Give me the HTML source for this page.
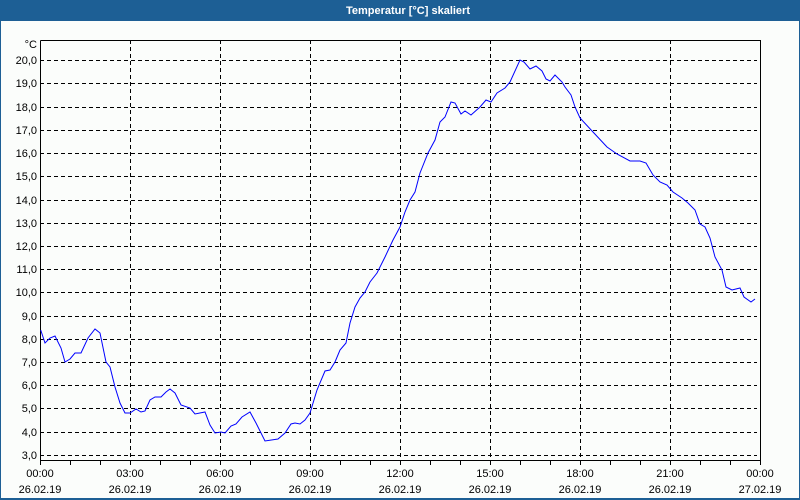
<!DOCTYPE html>
<html><head><meta charset="utf-8"><style>
body{margin:0;width:800px;height:500px;overflow:hidden;background:#fbfdfb;font-family:"Liberation Sans",sans-serif}
</style></head><body>
<svg width="800" height="500" xmlns="http://www.w3.org/2000/svg" style="display:block">
<rect x="0" y="0" width="800" height="500" fill="#fbfdfb"/>
<rect x="0" y="0" width="800" height="21" fill="#1d5f95"/>
<rect x="0" y="0" width="1" height="500" fill="#1d5f95"/>
<rect x="799" y="0" width="1" height="500" fill="#1d5f95"/>
<rect x="0" y="498" width="800" height="2" fill="#1d5f95"/>
<text x="408" y="14" fill="#fff" font-size="11" font-weight="bold" text-anchor="middle" font-family="Liberation Sans, sans-serif">Temperatur [°C] skaliert</text>
<g stroke="#000" stroke-width="1" stroke-dasharray="4,3" fill="none" shape-rendering="crispEdges">
<path d="M40 60.5H757M40 83.5H757M40 107.5H757M40 130.5H757M40 153.5H757M40 176.5H757M40 200.5H757M40 223.5H757M40 246.5H757M40 269.5H757M40 292.5H757M40 316.5H757M40 339.5H757M40 362.5H757M40 385.5H757M40 408.5H757M40 432.5H757M40 455.5H757"/>
<path d="M130.5 40V460M220.5 40V460M310.5 40V460M400.5 40V460M490.5 40V460M580.5 40V460M670.5 40V460"/>
</g>
<g stroke="#000" stroke-width="1" fill="none" shape-rendering="crispEdges">
<path d="M40.5 40.5H760.5V460.5M40.5 40.5V460.5H760.5"/>
<path d="M40.5 460V465M70.5 460V465M100.5 460V465M130.5 460V465M160.5 460V465M190.5 460V465M220.5 460V465M250.5 460V465M280.5 460V465M310.5 460V465M340.5 460V465M370.5 460V465M400.5 460V465M430.5 460V465M460.5 460V465M490.5 460V465M520.5 460V465M550.5 460V465M580.5 460V465M610.5 460V465M640.5 460V465M670.5 460V465M700.5 460V465M730.5 460V465M760.5 460V465"/>
</g>
<polyline fill="none" stroke="#0000ff" stroke-width="1" points="40.7,330 45,343 50,338 55,336 61,348 65,362 70,359 75,353 81,353 88,338 95,329 100,333 106,362 110,367 115,387 120,403 125,413 130,413 136,409 141,412 145,411 150,400 155,397 161,397 166,392 170,389 175,393 181,405 190,408 195,414 205,412 210,425 215,433 221,432 225,433 231,426 236,424 242,417 250,412 256,423 265,441 278,439 285,433 291,424 295,423 300,424 305,420 310,413 317,390 325,371 330,370 335,362 340,350 346,343 350,323 355,307 360,298 365,292 370,282 377,273 385,257 393,240 400,227 405,212 410,200 415,192 420,173 428,153 435,140 440,122 445,117 451,102 455,103 461,114 465,111 471,115 480,107 486,100 491,102 497,93 505,88 510,82 520,60 524,62 530,69 536,66 542,71 546,79 550,81 555,75 562,82 565,87 571,95 575,107 580,118 593,132 607,147 617,154 630,161 640,161 646,163 653,175 660,182 667,185 673,192 682,198 688,203 695,210 700,224 705,227 710,238 715,257 722,270 726,287 732,290 740,288 744,297 751,302 755,299"/>
<g font-size="11" fill="#000" text-anchor="end" font-family="Liberation Sans, sans-serif">
<text x="37" y="48">°C</text>
<text x="37" y="64">20,0</text><text x="37" y="87">19,0</text><text x="37" y="111">18,0</text><text x="37" y="134">17,0</text><text x="37" y="157">16,0</text><text x="37" y="180">15,0</text><text x="37" y="204">14,0</text><text x="37" y="227">13,0</text><text x="37" y="250">12,0</text><text x="37" y="273">11,0</text><text x="37" y="296">10,0</text><text x="37" y="320">9,0</text><text x="37" y="343">8,0</text><text x="37" y="366">7,0</text><text x="37" y="389">6,0</text><text x="37" y="412">5,0</text><text x="37" y="436">4,0</text><text x="37" y="459">3,0</text>
</g>
<g font-size="11" fill="#000" text-anchor="middle" font-family="Liberation Sans, sans-serif">
<text x="40" y="477">00:00</text><text x="130" y="477">03:00</text><text x="220" y="477">06:00</text><text x="310" y="477">09:00</text><text x="400" y="477">12:00</text><text x="490" y="477">15:00</text><text x="580" y="477">18:00</text><text x="670" y="477">21:00</text><text x="760" y="477">00:00</text>
<text x="40" y="493">26.02.19</text><text x="130" y="493">26.02.19</text><text x="220" y="493">26.02.19</text><text x="310" y="493">26.02.19</text><text x="400" y="493">26.02.19</text><text x="490" y="493">26.02.19</text><text x="580" y="493">26.02.19</text><text x="670" y="493">26.02.19</text><text x="760" y="493">27.02.19</text>
</g>
</svg>
</body></html>
